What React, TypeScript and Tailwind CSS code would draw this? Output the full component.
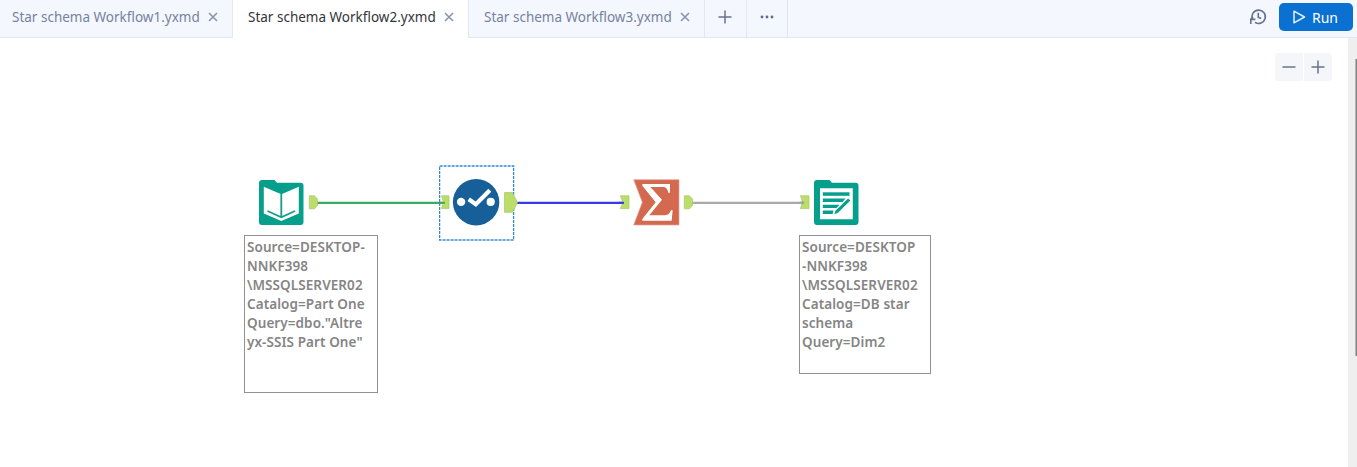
import type { ReactNode } from "react";

function CloseIcon() {
  return (
    <svg width="10" height="10" viewBox="0 0 10 10" className="shrink-0" fill="none" stroke="#8492b0" strokeWidth="1.5">
      <path d="M1 1 L9 9 M9 1 L1 9" />
    </svg>
  );
}

function Tab({ label, active = false }: { label: string; active?: boolean }) {
  return (
    <div
      className={
        active
          ? "flex h-[38px] w-[236px] items-center border-r border-[#e1e7f5] bg-white pb-[4px] pl-[15px] text-[#33353b]"
          : "flex h-[38px] w-[236px] items-center border-r border-b border-[#e1e7f5] bg-[#f4f7fd] pb-[3px] pl-[15px] text-[#76829f]"
      }
    >
      <span className="w-[196px] whitespace-nowrap text-[13.5px]">{label}</span>
      <CloseIcon />
    </div>
  );
}

function TabButton({ children }: { children: ReactNode }) {
  return (
    <button className="flex h-[38px] w-[41.5px] items-center justify-center border-r border-b border-[#e1e7f5] pb-[3px]">
      {children}
    </button>
  );
}

function Header() {
  return (
    <header className="flex h-[38px] bg-[#f4f7fd]">
      <div className="-ml-[3px] flex">
        <Tab label="Star schema Workflow1.yxmd" />
        <Tab label="Star schema Workflow2.yxmd" active />
        <Tab label="Star schema Workflow3.yxmd" />
      </div>
      <TabButton>
        <svg width="14" height="14" viewBox="0 0 14 14" stroke="#66748f" strokeWidth="1.5">
          <path d="M7 .5 V13.5 M.5 7 H13.5" />
        </svg>
      </TabButton>
      <TabButton>
        <svg width="14" height="4" viewBox="0 0 14 4" fill="#5d6b88">
          <circle cx="2" cy="2" r="1.4" />
          <circle cx="7" cy="2" r="1.4" />
          <circle cx="12" cy="2" r="1.4" />
        </svg>
      </TabButton>
      <div className="flex flex-1 items-center justify-end border-b border-[#e1e7f5] pr-[4px] pb-[4px]">
        <svg width="18" height="18" viewBox="0 0 18 18" className="mr-[12px]" fill="none" stroke="#66728e" strokeWidth="1.6">
          <path d="M3.4 11.2 A6.7 6.7 0 1 1 6 14.4" />
          <path d="M1.8 16 V11.4 H6.4 M1.8 11.4 L4 9" />
          <path d="M9.3 4.8 V9.3 L12.2 10.6" />
        </svg>
        <button className="flex h-[28px] w-[74px] items-center rounded-[5px] bg-[#0a70d1] pl-[14px] text-white">
          <svg width="13" height="14" viewBox="0 0 13 14" fill="none" stroke="#e6f1fc" strokeWidth="1.5" strokeLinejoin="round">
            <path d="M1 1.2 L11.5 7 L1 12.8 Z" />
          </svg>
          <span className="ml-[6px] pt-px text-[14px]">Run</span>
        </button>
      </div>
    </header>
  );
}

function Connections() {
  return (
    <svg className="absolute top-0 left-0" width="1340" height="429" viewBox="0 38 1340 429" fill="none">
      <path d="M317 202.8 H445" stroke="#3fa765" strokeWidth="2.3" />
      <path d="M517 202.8 H624" stroke="#3939e6" strokeWidth="2.3" />
      <path d="M692 202.8 H804" stroke="#a9a9a9" strokeWidth="2.3" />
      <g fill="#bade69" stroke="#a4c863" strokeWidth=".7">
        <path d="M309.3 195.8 H314.5 L317.5 199 V205.5 L314.5 208.8 H309.3 Z" />
        <path d="M441.5 195.8 H449 V208.6 H441.5 L443.5 202.2 Z" />
        <path d="M504.5 192.6 H512.5 L517.5 202.5 L512.5 212.2 H504.5 Z" />
        <path d="M620.3 195.8 H629 V208.6 H620.3 L623 202.2 Z" />
        <path d="M684.3 195.8 H689.5 L692.5 199 V205.5 L689.5 208.8 H684.3 Z" />
        <path d="M800.3 195.8 H809 V208.6 H800.3 L803 202.2 Z" />
      </g>
      <path d="M441 202.8 H445" stroke="#55a84f" strokeWidth="2" />
      <path d="M619 202.8 H624" stroke="#3939e6" strokeWidth="2" />
      <path d="M799 202.8 H802" stroke="#a9a9a9" strokeWidth="2" />
      <path d="M801.5 200.5 L805 202.8 L801.5 205 Z" fill="#a0a58e" />
    </svg>
  );
}

const folderPath = "M3 0 H15.5 L18 2.7 H41.5 A3 3 0 0 1 44.5 5.7 V42 A3 3 0 0 1 41.5 45 H3 A3 3 0 0 1 0 42 V3 A3 3 0 0 1 3 0 Z";

function InputTool() {
  return (
    <svg className="absolute top-[142px] left-[259px]" width="45" height="45" viewBox="0 0 45 45">
      <path d={folderPath} fill="#059f8c" />
      <path d="M4.8 6.8 L22.3 14.3 L39.8 6.8 V33.5 L22.3 41 L4.8 33.5 Z" fill="#fff" />
      <path d="M22.3 14 V37 M8.5 31 L22.3 37.3 L36 31" fill="none" stroke="#129d8c" strokeWidth="1.8" />
    </svg>
  );
}

function SelectionFrame() {
  return (
    <svg className="absolute top-[127px] left-[439px]" width="76" height="76" viewBox="439 165 76 76">
      <rect x="439.6" y="166" width="74" height="74" fill="none" stroke="#3089d8" strokeWidth="1.3" strokeDasharray="3 1" />
    </svg>
  );
}

function SelectTool() {
  return (
    <svg className="absolute top-[140px] left-[452px]" width="48" height="48" viewBox="452 178 48 48">
      <circle cx="476.1" cy="202.2" r="23.2" fill="#175f99" />
      <circle cx="461.1" cy="201.9" r="4.2" fill="#fff" />
      <circle cx="490.7" cy="201.9" r="4.1" fill="#fff" />
      <path d="M468.7 199.3 L475.8 204.3 L489.8 190.3" fill="none" stroke="#fff" strokeWidth="4.2" />
    </svg>
  );
}

function SummarizeTool() {
  return (
    <svg className="absolute top-[141px] left-[633px]" width="47" height="48" viewBox="69 42 141 144">
      <path d="M71 44 H207 V180 H71 L97 112 Z" fill="#d3694f" stroke="#e4a595" strokeWidth="2" />
      <path
        d="M97 57 H180 V83 H175 C172 71 168 66 158 66 H121 L156 104 L118 151 H160 C173 151 178 148 183 136 H188 L185 167 H97 V162 L137 112 L97 62Z"
        fill="#fff"
      />
    </svg>
  );
}

function OutputTool() {
  return (
    <svg className="absolute top-[142px] left-[814px]" width="45" height="45" viewBox="0 0 45 45">
      <path d={folderPath} fill="#059f8c" />
      <path d="M6 8.3 H38.8 V39.3 H6 Z" fill="#fff" />
      <g fill="#059f8c">
        <path d="M8.8 12.3 H35.5 V15.8 H8.8 Z" />
        <path d="M8.8 18.5 H31.5 L28.5 21.9 H8.8 Z" />
        <path d="M8.8 24.8 H25.5 L22.5 28 H8.8 Z" />
        <path d="M8.8 30.5 H19.5 L18.6 34 H8.8 Z" />
        <path d="M20.3 34.3 L21.5 30.7 L34 18.4 L36.3 20.5 L24 32.8 Z" />
      </g>
    </svg>
  );
}

function Annotation({ lines, className }: { lines: string[]; className: string }) {
  return (
    <div className={`absolute border border-[#929292] bg-white pt-[1.5px] pl-[2px] text-[13.5px] leading-[19px] font-semibold tracking-[0.08px] text-[#858585] ${className}`}>
      {lines.map((line) => (
        <div key={line} className="whitespace-nowrap">
          {line}
        </div>
      ))}
    </div>
  );
}

function Canvas() {
  return (
    <main className="flex flex-1">
      <div className="relative flex-1 overflow-hidden bg-white">
        <SelectionFrame />
        <Connections />
        <InputTool />
        <SelectTool />
        <SummarizeTool />
        <OutputTool />
        <Annotation
          className="top-[197px] left-[244px] h-[158px] w-[134px]"
          lines={["Source=DESKTOP-", "NNKF398", "\\MSSQLSERVER02", "Catalog=Part One", 'Query=dbo."Altre', 'yx-SSIS Part One"']}
        />
        <Annotation
          className="top-[197px] left-[799px] h-[139px] w-[132px]"
          lines={["Source=DESKTOP", "-NNKF398", "\\MSSQLSERVER02", "Catalog=DB star", "schema", "Query=Dim2"]}
        />
        <div className="absolute top-[15px] right-[16px] flex gap-px">
          <button className="flex h-[28px] w-[28px] items-center justify-center rounded-l-[4px] bg-[#f4f6fa]">
            <svg width="14" height="14" viewBox="0 0 14 14" stroke="#66748f" strokeWidth="1.5">
              <path d="M.5 7 H13.5" />
            </svg>
          </button>
          <button className="flex h-[28px] w-[28px] items-center justify-center rounded-r-[4px] bg-[#f4f6fa]">
            <svg width="14" height="14" viewBox="0 0 14 14" stroke="#66748f" strokeWidth="1.5">
              <path d="M7 .5 V13.5 M.5 7 H13.5" />
            </svg>
          </button>
        </div>
      </div>
      <div className="flex w-[9px] justify-end bg-[#efefef] pt-[21px]">
        <div className="h-[297px] w-[2px] border-l border-[#b5b5b5] bg-[#858585]" />
      </div>
    </main>
  );
}

export default function App() {
  return (
    <div className="flex h-[467px] w-[1357px] flex-col overflow-hidden bg-white font-['Noto_Sans',sans-serif]">
      <Header />
      <Canvas />
    </div>
  );
}
